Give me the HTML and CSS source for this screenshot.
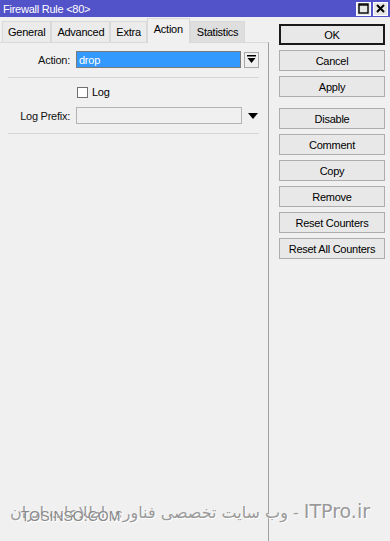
FILE: index.html
```html
<!DOCTYPE html>
<html>
<head>
<meta charset="utf-8">
<link rel="stylesheet" href="styles.css">
</head>
<body>
<div class="window">
  <div class="titlebar">
    <span class="title">Firewall Rule &lt;80&gt;</span>
    <div class="tb-btns">
      <span class="tb-btn"><svg width="11" height="11" viewBox="0 0 11 11"><rect x="1" y="1" width="9" height="9" fill="none" stroke="#000" stroke-width="1.4"/><line x1="1" y1="2" x2="10" y2="2" stroke="#000" stroke-width="1.4"/></svg></span>
      <span class="tb-btn"><svg width="11" height="11" viewBox="0 0 11 11"><path d="M2 2 L9 9 M9 2 L2 9" stroke="#000" stroke-width="2"/></svg></span>
    </div>
  </div>
  <div class="main">
    <div class="left">
      <div class="tabs">
        <span class="tab">General</span>
        <span class="tab">Advanced</span>
        <span class="tab">Extra</span>
        <span class="tab active">Action</span>
        <span class="tab last">Statistics</span>
      </div>
      <div class="panel">
        <div class="row">
          <span class="label">Action:</span>
          <span class="field sel">drop</span>
          <span class="dd-btn"><svg width="9" height="9" viewBox="0 0 9 9"><rect x="0" y="0" width="9" height="1.5" fill="#000"/><path d="M0.5 3 H8.5 L4.5 8 Z" fill="#000"/></svg></span>
        </div>
        <div class="sep"></div>
        <div class="row check-row">
          <span class="label"></span>
          <span class="checkbox"></span>
          <span class="check-label">Log</span>
        </div>
        <div class="row">
          <span class="label">Log Prefix:</span>
          <span class="field empty"></span>
          <span class="arrow"><svg width="10" height="6" viewBox="0 0 10 6"><path d="M0 0 H10 L5 6 Z" fill="#000"/></svg></span>
        </div>
        <div class="sep"></div>
      </div>
    </div>
    <div class="right">
      <div class="btn ok">OK</div>
      <div class="btn">Cancel</div>
      <div class="btn">Apply</div>
      <div class="btn gap">Disable</div>
      <div class="btn">Comment</div>
      <div class="btn">Copy</div>
      <div class="btn">Remove</div>
      <div class="btn">Reset Counters</div>
      <div class="btn">Reset All Counters</div>
    </div>
  </div>
  <div class="wm wm-fa" dir="rtl"><span class="wm-lat">ITPro.ir</span> - وب سایت تخصصی فناوری اطلاعات ایران</div>
  <div class="wm wm-en">TOSINSO.COM</div>
</div>
</body>
</html>
```

FILE: styles.css
```css
* { box-sizing: border-box; }
html, body { margin: 0; padding: 0; }
body {
  width: 390px;
  height: 541px;
  overflow: hidden;
  background: #f0f0f0;
  font-family: "Liberation Sans", Arial, sans-serif;
  font-size: 11px;
  letter-spacing: -0.25px;
  color: #000;
}
.window {
  position: relative;
  width: 390px;
  height: 541px;
  display: flex;
  flex-direction: column;
}
.titlebar {
  height: 17px;
  background: #5252c9;
  display: flex;
  align-items: center;
  justify-content: space-between;
  padding: 0 2px 0 3px;
}
.title {
  color: #fff;
  font-size: 11px;
}
.tb-btns { display: flex; gap: 2px; }
.tb-btn {
  width: 15px;
  height: 14px;
  background: #e6e6e6;
  border: 1px solid #fff;
  display: flex;
  align-items: center;
  justify-content: center;
}
.main {
  flex: 1;
  display: flex;
}
.left {
  width: 269px;
  display: flex;
  flex-direction: column;
}
.tabs {
  height: 25px;
  display: flex;
  align-items: flex-end;
  padding-left: 2px;
}
.tab {
  height: 21px;
  padding: 0 5px;
  display: flex;
  align-items: center;
  background: #ebebeb;
  border: 1px solid #d9d9d9;
  border-bottom: none;
  margin-right: 0;
  font-size: 11px;
}
.tab.last { background: #dedede; padding: 0 6px; }
.tab.active {
  height: 25px;
  background: #f0f0f0;
  padding: 0 6px 4px;
  position: relative;
  z-index: 1;
  margin-bottom: -1px;
}
.panel {
  flex: 1;
  border-top: 1px solid #d9d9d9;
  border-right: 1px solid #a0a0a0;
  padding: 8px 9px 0 8px;
}
.row {
  display: flex;
  align-items: center;
  height: 17px;
}
.label {
  width: 68px;
  text-align: right;
  padding-right: 6px;
  flex: none;
  color: #111;
}
.field {
  width: 165px;
  height: 17px;
  border: 1px solid #b4b4b4;
  flex: none;
  display: flex;
  align-items: center;
  padding-left: 2px;
}
.field.sel {
  background: #3399ff;
  border-color: #7a7a7a;
  color: #fff;
}
.field.empty { background: #f0f0f0; width: 166px; }
.dd-btn {
  width: 16px;
  height: 16px;
  margin-left: 3px;
  border: 1px solid #a8a8a8;
  display: flex;
  align-items: center;
  justify-content: center;
  background: #f0f0f0;
}
.arrow {
  margin-left: 6px;
  display: flex;
  align-items: center;
}
.sep {
  height: 1px;
  background: #d5d5d5;
  margin: 9px 0 9px 0;
}
.check-row { margin-bottom: 9px; margin-top: -1px; height: 12px; }
.checkbox {
  width: 11px;
  height: 11px;
  border: 1px solid #707070;
  background: #fff;
  margin-left: 1px;
  flex: none;
}
.check-label { margin-left: 4px; }
.right {
  display: flex;
  flex-direction: column;
  gap: 5px;
  padding: 7px 0 0 10px;
}
.btn {
  width: 106px;
  height: 21px;
  border: 1px solid #adadad;
  background: #e8e8e8;
  display: flex;
  align-items: center;
  justify-content: center;
  font-size: 11px;
}
.btn.ok { border: 2px solid #1a1a1a; }
.btn.gap { margin-top: 6px; }
.wm {
  position: absolute;
  color: #9a9a9a;
  text-shadow: 1px 1px 0 #fff;
  white-space: nowrap;
  letter-spacing: 0;
}
.wm-fa {
  right: 20px;
  top: 500px;
  font-family: "DejaVu Sans", "Liberation Sans", sans-serif;
  font-size: 16px;
}
.wm-lat {
  font-size: 19px;
}
.wm-en {
  left: 21px;
  top: 508px;
  font-family: "Liberation Sans", sans-serif;
  font-size: 14px;
  color: #8a8a8a;
}
```
